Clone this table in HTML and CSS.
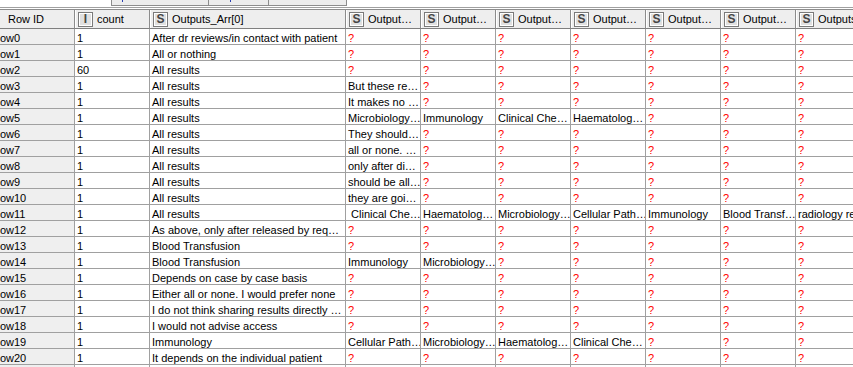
FILE: index.html
```html
<!DOCTYPE html>
<html>
<head>
<meta charset="utf-8">
<link rel="stylesheet" href="styles.css">
</head>
<body>
<div class="viewport">
  <div class="tabs-bar">
    <div class="tabs">
      <div class="tab t1"><span class="mark m1"></span></div>
      <div class="tab t2"><span class="mark m2"></span></div>
      <div class="tab t3"></div>
    </div>
  </div>
  <div class="table">
    <div class="row head">
      <div class="cell rid-head">Row ID</div>
      <div class="cell"><span class="ic">I</span><span class="ht">count</span></div>
      <div class="cell"><span class="ic">S</span><span class="ht">Outputs_Arr[0]</span></div>
      <div class="cell"><span class="ic">S</span><span class="ht">Output…</span></div>
      <div class="cell"><span class="ic">S</span><span class="ht">Output…</span></div>
      <div class="cell"><span class="ic">S</span><span class="ht">Output…</span></div>
      <div class="cell"><span class="ic">S</span><span class="ht">Output…</span></div>
      <div class="cell"><span class="ic">S</span><span class="ht">Output…</span></div>
      <div class="cell"><span class="ic">S</span><span class="ht">Output…</span></div>
      <div class="cell"><span class="ic">S</span><span class="ht">Outputs_Arr[7]</span></div>
    </div>
    <div class="row"><div class="cell rid">Row0</div><div class="cell">1</div><div class="cell">After dr reviews/in contact with patient</div><div class="cell q">?</div><div class="cell q">?</div><div class="cell q">?</div><div class="cell q">?</div><div class="cell q">?</div><div class="cell q">?</div><div class="cell q">?</div></div>
    <div class="row"><div class="cell rid">Row1</div><div class="cell">1</div><div class="cell">All or nothing</div><div class="cell q">?</div><div class="cell q">?</div><div class="cell q">?</div><div class="cell q">?</div><div class="cell q">?</div><div class="cell q">?</div><div class="cell q">?</div></div>
    <div class="row"><div class="cell rid">Row2</div><div class="cell">60</div><div class="cell">All results</div><div class="cell q">?</div><div class="cell q">?</div><div class="cell q">?</div><div class="cell q">?</div><div class="cell q">?</div><div class="cell q">?</div><div class="cell q">?</div></div>
    <div class="row"><div class="cell rid">Row3</div><div class="cell">1</div><div class="cell">All results</div><div class="cell">But these re…</div><div class="cell q">?</div><div class="cell q">?</div><div class="cell q">?</div><div class="cell q">?</div><div class="cell q">?</div><div class="cell q">?</div></div>
    <div class="row"><div class="cell rid">Row4</div><div class="cell">1</div><div class="cell">All results</div><div class="cell">It makes no …</div><div class="cell q">?</div><div class="cell q">?</div><div class="cell q">?</div><div class="cell q">?</div><div class="cell q">?</div><div class="cell q">?</div></div>
    <div class="row"><div class="cell rid">Row5</div><div class="cell">1</div><div class="cell">All results</div><div class="cell">Microbiology…</div><div class="cell">Immunology</div><div class="cell">Clinical Che…</div><div class="cell">Haematolog…</div><div class="cell q">?</div><div class="cell q">?</div><div class="cell q">?</div></div>
    <div class="row"><div class="cell rid">Row6</div><div class="cell">1</div><div class="cell">All results</div><div class="cell">They should…</div><div class="cell q">?</div><div class="cell q">?</div><div class="cell q">?</div><div class="cell q">?</div><div class="cell q">?</div><div class="cell q">?</div></div>
    <div class="row"><div class="cell rid">Row7</div><div class="cell">1</div><div class="cell">All results</div><div class="cell">all or none. …</div><div class="cell q">?</div><div class="cell q">?</div><div class="cell q">?</div><div class="cell q">?</div><div class="cell q">?</div><div class="cell q">?</div></div>
    <div class="row"><div class="cell rid">Row8</div><div class="cell">1</div><div class="cell">All results</div><div class="cell">only after di…</div><div class="cell q">?</div><div class="cell q">?</div><div class="cell q">?</div><div class="cell q">?</div><div class="cell q">?</div><div class="cell q">?</div></div>
    <div class="row"><div class="cell rid">Row9</div><div class="cell">1</div><div class="cell">All results</div><div class="cell">should be all…</div><div class="cell q">?</div><div class="cell q">?</div><div class="cell q">?</div><div class="cell q">?</div><div class="cell q">?</div><div class="cell q">?</div></div>
    <div class="row"><div class="cell rid">Row10</div><div class="cell">1</div><div class="cell">All results</div><div class="cell">they are goi…</div><div class="cell q">?</div><div class="cell q">?</div><div class="cell q">?</div><div class="cell q">?</div><div class="cell q">?</div><div class="cell q">?</div></div>
    <div class="row"><div class="cell rid">Row11</div><div class="cell">1</div><div class="cell">All results</div><div class="cell">&nbsp;Clinical Che…</div><div class="cell">Haematolog…</div><div class="cell">Microbiology…</div><div class="cell">Cellular Path…</div><div class="cell">Immunology</div><div class="cell">Blood Transf…</div><div class="cell">radiology results</div></div>
    <div class="row"><div class="cell rid">Row12</div><div class="cell">1</div><div class="cell">As above, only after released by req…</div><div class="cell q">?</div><div class="cell q">?</div><div class="cell q">?</div><div class="cell q">?</div><div class="cell q">?</div><div class="cell q">?</div><div class="cell q">?</div></div>
    <div class="row"><div class="cell rid">Row13</div><div class="cell">1</div><div class="cell">Blood Transfusion</div><div class="cell q">?</div><div class="cell q">?</div><div class="cell q">?</div><div class="cell q">?</div><div class="cell q">?</div><div class="cell q">?</div><div class="cell q">?</div></div>
    <div class="row"><div class="cell rid">Row14</div><div class="cell">1</div><div class="cell">Blood Transfusion</div><div class="cell">Immunology</div><div class="cell">Microbiology…</div><div class="cell q">?</div><div class="cell q">?</div><div class="cell q">?</div><div class="cell q">?</div><div class="cell q">?</div></div>
    <div class="row"><div class="cell rid">Row15</div><div class="cell">1</div><div class="cell">Depends on case by case basis</div><div class="cell q">?</div><div class="cell q">?</div><div class="cell q">?</div><div class="cell q">?</div><div class="cell q">?</div><div class="cell q">?</div><div class="cell q">?</div></div>
    <div class="row"><div class="cell rid">Row16</div><div class="cell">1</div><div class="cell">Either all or none. I would prefer none</div><div class="cell q">?</div><div class="cell q">?</div><div class="cell q">?</div><div class="cell q">?</div><div class="cell q">?</div><div class="cell q">?</div><div class="cell q">?</div></div>
    <div class="row"><div class="cell rid">Row17</div><div class="cell">1</div><div class="cell">I do not think sharing results directly …</div><div class="cell q">?</div><div class="cell q">?</div><div class="cell q">?</div><div class="cell q">?</div><div class="cell q">?</div><div class="cell q">?</div><div class="cell q">?</div></div>
    <div class="row"><div class="cell rid">Row18</div><div class="cell">1</div><div class="cell">I would not advise access</div><div class="cell q">?</div><div class="cell q">?</div><div class="cell q">?</div><div class="cell q">?</div><div class="cell q">?</div><div class="cell q">?</div><div class="cell q">?</div></div>
    <div class="row"><div class="cell rid">Row19</div><div class="cell">1</div><div class="cell">Immunology</div><div class="cell">Cellular Path…</div><div class="cell">Microbiology…</div><div class="cell">Haematolog…</div><div class="cell">Clinical Che…</div><div class="cell q">?</div><div class="cell q">?</div><div class="cell q">?</div></div>
    <div class="row"><div class="cell rid">Row20</div><div class="cell">1</div><div class="cell">It depends on the individual patient</div><div class="cell q">?</div><div class="cell q">?</div><div class="cell q">?</div><div class="cell q">?</div><div class="cell q">?</div><div class="cell q">?</div><div class="cell q">?</div></div>
    <div class="row"><div class="cell rid">Row21</div><div class="cell">1</div><div class="cell">&nbsp;</div><div class="cell q">?</div><div class="cell q">?</div><div class="cell q">?</div><div class="cell q">?</div><div class="cell q">?</div><div class="cell q">?</div><div class="cell q">?</div></div>
  </div>
</div>
</body>
</html>
```
FILE: styles.css
```css
* { box-sizing: border-box; }
html, body { margin: 0; padding: 0; }
body {
  background: #ffffff;
  font-family: "Liberation Sans", Arial, sans-serif;
  font-size: 11px;
  color: #000;
  overflow: hidden;
}
.viewport {
  width: 853px;
  height: 367px;
  overflow: hidden;
  background: #fff;
}
.tabs-bar {
  height: 8px;
  border-bottom: 1px solid #a0a0a0;
  margin-bottom: 1px;
}
.tabs {
  display: flex;
  margin-left: 111px;
  width: 236px;
  height: 6px;
  background: #ececec;
  border-left: 1px solid #8c8c8c;
  border-right: 1px solid #8c8c8c;
  border-bottom: 1px solid #8c8c8c;
}
.tab {
  position: relative;
  height: 100%;
  border-right: 1px solid #8c8c8c;
}
.tab:last-child { border-right: none; flex: 1; }
.t1 { width: 97px; }
.t2 { width: 60px; }
.mark {
  position: absolute;
  top: 0;
  width: 1px;
  height: 2px;
  background: #2a3fb0;
}
.m1 { left: 10px; }
.m2 { left: 21px; }
.table {
  margin-left: -10px;
  width: max-content;
}
.row {
  display: grid;
  grid-template-columns: 85px 75px 196px repeat(7, 75px);
}
.cell {
  height: 16px;
  line-height: 16px;
  padding-top: 1px;
  padding-left: 2px;
  border-right: 1px solid #a0a0a0;
  border-bottom: 1px solid #a0a0a0;
  white-space: nowrap;
  overflow: hidden;
}
.rid { background: #efefef; }
.q { color: #ff0000; }
.head .cell {
  height: 20px;
  line-height: normal;
  padding-top: 0;
  display: flex;
  align-items: center;
  gap: 4px;
  padding-left: 3px;
  background: #eeeeee;
  border-top: 1px solid #8c8c8c;
  border-bottom: 1px solid #7f7f7f;
  border-right: 1px solid #8c8c8c;
  box-shadow: inset 1px 0 #ffffff;
}
.head .rid-head { padding-left: 18px; }
.ic {
  flex: none;
  width: 15px;
  height: 15px;
  display: flex;
  align-items: center;
  justify-content: center;
  border: 1px solid #7a7a7a;
  box-shadow: inset 0 0 0 1px #ffffff;
  background: #e0e0e0;
  color: #454545;
  font-weight: bold;
  font-size: 12px;
}
.ht { white-space: nowrap; }
```
